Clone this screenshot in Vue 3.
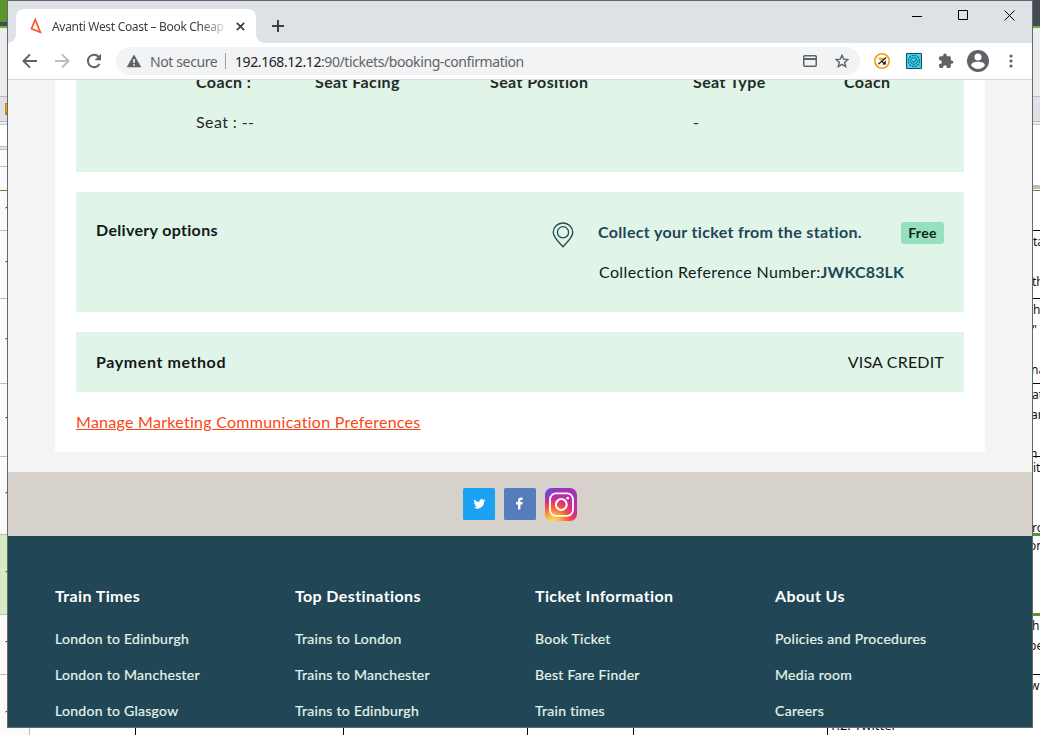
<script setup>
const footer = [
  { title: 'Train Times', links: ['London to Edinburgh', 'London to Manchester', 'London to Glasgow'] },
  { title: 'Top Destinations', links: ['Trains to London', 'Trains to Manchester', 'Trains to Edinburgh'] },
  { title: 'Ticket Information', links: ['Book Ticket', 'Best Fare Finder', 'Train times'] },
  { title: 'About Us', links: ['Policies and Procedures', 'Media room', 'Careers'] },
]
const leftLines = [230, 298, 383, 456, 534, 614, 674]
const ticks = [207, 261, 338, 417, 492, 571, 641, 711]
const rightLines = [230, 298, 383, 456, 674]
const bottomLines = [135, 343, 527, 633, 827]
const sheetText = [
  ['ta', 1033, 246], ['th', 1032, 286], ['h', 1033, 314], ['"', 1032, 334], ['na', 1031, 374],
  ['at', 1032, 399], ['an', 1031, 419], ['h', 1030, 458], ['it', 1033, 472], ['ro', 1032, 532],
  ['on', 1029, 550], ['h', 1032, 630], ['pe', 1029, 650], ['w', 1030, 690],
]
</script>

<template>
  <div class="desktop">
    <svg class="sheet" width="1040" height="735" viewBox="0 0 1040 735" shape-rendering="crispEdges">
      <rect width="1040" height="735" fill="#fff" />
      <rect width="1040" height="97" fill="#ebecee" />
      <rect width="8" height="22" fill="#5b962c" />
      <rect y="22" width="8" height="4" fill="#464b53" />
      <rect y="26" width="8" height="2" fill="#69b32d" />
      <rect x="1032" width="8" height="26" fill="#464b53" />
      <rect x="1032" y="26" width="8" height="2" fill="#69b32d" />
      <rect y="96" width="1040" height="26" fill="#dfe1e7" />
      <rect y="96" width="1040" height="1" fill="#bdbec2" />
      <rect y="121" width="1040" height="1" fill="#b7b8bc" />
      <rect y="122" width="1040" height="2" fill="#ececee" />
      <rect y="124" width="1040" height="1" fill="#c5c5c5" />
      <rect x="5" y="103" width="3" height="12" fill="#c9820f" />
      <rect x="6" y="104" width="2" height="8" fill="#f0ab1c" />
      <rect y="146" width="8" height="4" fill="#e4e4e4" />
      <rect y="146" width="8" height="1" fill="#bbb" />
      <rect y="149" width="8" height="1" fill="#bbb" />
      <rect y="150" width="29" height="585" fill="#fafafa" />
      <rect y="166" width="8" height="1" fill="#bcbcbc" />
      <rect y="535" width="8" height="79" fill="#d7ecc4" />
      <rect y="190" width="1040" height="1" fill="#4f8f2c" />
      <rect x="1032" y="185" width="8" height="4" fill="#bdbdbd" />
      <rect v-for="y in leftLines" :key="y" :y="y" width="8" height="1" fill="#bcbcbc" />
      <g v-for="y in ticks" :key="y">
        <rect x="5" :y="y" width="1" height="2" fill="#c9bda9" />
        <rect x="6" :y="y" width="2" height="1" fill="#3b3a22" />
      </g>
      <rect v-for="y in rightLines" :key="y" x="1032" :y="y" width="8" height="1" fill="#000" />
      <rect x="1032" y="533" width="8" height="3" fill="#5b962c" />
      <rect x="1032" y="613" width="8" height="3" fill="#5b962c" />
      <rect x="29" y="727" width="1" height="8" fill="#bcbcbc" />
      <rect v-for="x in bottomLines" :key="x" :x="x" y="727" width="1" height="8" fill="#000" />
      <text v-for="t in sheetText" :key="t[2]" :x="t[1]" :y="t[2]">{{ t[0] }}</text>
      <text class="list-item" x="829" y="730">1.2. Twitter</text>
    </svg>

    <div class="window">
      <div class="tabstrip">
        <div class="tab">
          <svg width="12" height="16" viewBox="0 0 12 16"><path d="M5.2 1.6 10.3 14.2 1.5 10.8Z" fill="none" stroke="#fb5527" stroke-width="1.7" /></svg>
          <span class="tab-title">Avanti West Coast – Book Cheap</span>
          <svg class="close" width="9" height="9" viewBox="0 0 9 9"><path d="M.8.8l7.4 7.4M8.2.8.8 8.2" stroke="#3c4043" stroke-width="1.7" /></svg>
        </div>
        <svg class="plus" width="12" height="12" viewBox="0 0 12 12"><path d="M6 0v12M0 6h12" stroke="#3c4043" stroke-width="2" /></svg>
        <div class="controls">
          <svg width="10" height="11" viewBox="0 0 10 11"><path d="M0 6.5h10" stroke="#000" /></svg>
          <svg width="10" height="10" viewBox="0 0 10 10"><path d="M.5.5h9v9h-9z" fill="none" stroke="#000" /></svg>
          <svg width="11" height="11" viewBox="0 0 11 11"><path d="M.5.5l10 10M10.5.5l-10 10" stroke="#000" /></svg>
        </div>
      </div>
      <div class="toolbar">
        <svg class="nav" width="16" height="16" viewBox="0 0 16 16"><path d="M15 8H2M8 1.4 1.5 8 8 14.6" fill="none" stroke="#5f6368" stroke-width="2" /></svg>
        <svg class="nav" width="16" height="16" viewBox="0 0 16 16"><path d="M1 8h13M8 1.4 14.5 8 8 14.6" fill="none" stroke="#babcbe" stroke-width="2" /></svg>
        <svg class="nav" width="16" height="16" viewBox="0 0 16 16"><path d="M13.5 11A6.2 6.2 0 1 1 12.6 3.7" fill="none" stroke="#5f6368" stroke-width="2" /><path d="M15 .8v6.4H8.6Z" fill="#5f6368" /></svg>
        <div class="omnibox">
          <svg width="16" height="14" viewBox="0 0 16 14"><path d="M8 .5 15.3 13.3H.7Z" fill="#5f6368" /><path d="M8 5v4M8 10.2v1.6" stroke="#fff" stroke-width="1.5" /></svg>
          <span class="insecure">Not secure</span>
          <span class="bar"></span>
          <span class="url">192.168.12.12<i>:90/tickets/booking-confirmation</i></span>
          <svg class="card-icon" width="14" height="12" viewBox="0 0 14 12"><rect x=".75" y=".75" width="12.5" height="10.5" rx="1" fill="none" stroke="#5f6368" stroke-width="1.5" /><path d="M1 4h12" stroke="#5f6368" stroke-width="2" /></svg>
          <svg width="14" height="14" viewBox="0 0 14 14"><path d="M7 1.2 8.7 5.1 13 5.5 9.7 8.3 10.7 12.5 7 10.3 3.3 12.5 4.3 8.3 1 5.5 5.3 5.1Z" fill="none" stroke="#5f6368" stroke-width="1.4" /></svg>
        </div>
        <div class="extensions">
          <svg width="16" height="16" viewBox="0 0 16 16"><circle cx="8" cy="8" r="7.2" fill="#fff" stroke="#f89a0b" stroke-width="1.6" /><path d="M3.6 4.8h7L7.5 8.2 5 6.3Z" fill="#f5a018" /><path d="M4.3 11.2 12.2 4.6M8 8.6l3 2.7" stroke="#222" stroke-width="1.3" fill="none" /><path d="M11.8 7v4.5H8.5Z" fill="#222" /></svg>
          <svg width="16" height="16" viewBox="0 0 16 16"><path d="M.5.5h15v15H.5z" fill="#3dd9ea" stroke="#164b60" /><circle cx="8" cy="8" r="5.6" fill="none" stroke="#1b6b80" stroke-width="1.4" stroke-dasharray="2 .9" /><circle cx="8" cy="8" r="3.4" fill="none" stroke="#1b6b80" /><path d="m6.2 8 1.4 1.5 2.6-3" fill="none" stroke="#164b60" /></svg>
          <svg width="16" height="16" viewBox="0 0 16 16"><path d="M13.7 7.4h-.9V4.6c0-.8-.6-1.4-1.4-1.4H8.7v-.9a1.7 1.7 0 0 0-3.5 0v.9H2.5c-.8 0-1.4.6-1.4 1.4v2.6H2a1.8 1.8 0 0 1 0 3.7h-.9v2.6c0 .8.6 1.4 1.4 1.4h2.6V14a1.8 1.8 0 0 1 3.7 0v.9h2.6c.8 0 1.4-.6 1.4-1.4v-2.7h.9a1.7 1.7 0 0 0 0-3.4Z" fill="#5f6368" /></svg>
          <svg class="avatar" width="22" height="22" viewBox="0 0 22 22"><circle cx="11" cy="11" r="11" fill="#5f6368" /><circle cx="11" cy="7" r="3.5" fill="#fff" /><path d="M4.2 15.2c0-4.6 13.6-4.6 13.6 0C16.2 17.7 13.7 19 11 19s-5.2-1.3-6.8-3.8Z" fill="#fff" /></svg>
          <svg class="menu" width="4" height="14" viewBox="0 0 4 14"><circle cx="2" cy="2" r="1.6" fill="#5f6368" /><circle cx="2" cy="7" r="1.6" fill="#5f6368" /><circle cx="2" cy="12" r="1.6" fill="#5f6368" /></svg>
        </div>
      </div>

      <div class="page">
        <main>
          <section class="seats">
            <b>Coach :</b><b>Seat Facing</b><b>Seat Position</b><b>Seat Type</b><b>Coach</b>
            <span>Seat : --</span><span></span><span></span><span>-</span>
          </section>
          <section class="delivery">
            <h2>Delivery options</h2>
            <svg width="22" height="26" viewBox="0 0 22 26"><path d="M11 24.8C8 21.3 1.2 15.7 1.2 10.3a9.8 9.3 0 0 1 19.6 0C20.8 15.7 14 21.3 11 24.8Z" fill="none" stroke="#214656" stroke-width="1.3" /><circle cx="11" cy="10.3" r="5.6" fill="none" stroke="#214656" stroke-width="1.3" /></svg>
            <div class="collect">
              <div class="station"><strong>Collect your ticket from the station.</strong><em>Free</em></div>
              <p><span class="ref">Collection Reference Number:</span><b>JWKC83LK</b></p>
            </div>
          </section>
          <section class="payment">
            <h2>Payment method</h2>
            <span>VISA CREDIT</span>
          </section>
          <a class="manage">Manage Marketing Communication Preferences</a>
        </main>
        <div class="social">
          <svg width="32" height="32" viewBox="0 0 32 32"><rect width="32" height="32" rx="1.5" fill="#1da1f2" /><path transform="translate(10.5 10) scale(.49)" d="M24 4.6a10 10 0 0 1-2.8.8 5 5 0 0 0 2.2-2.7c-1 .6-2 1-3.1 1.2a4.9 4.9 0 0 0-8.4 4.5C7.7 8.2 4.1 6.3 1.7 3.2a4.9 4.9 0 0 0 1.5 6.6c-.8 0-1.6-.2-2.2-.6a4.9 4.9 0 0 0 3.9 4.9c-.7.2-1.5.2-2.2.1a4.9 4.9 0 0 0 4.6 3.4A9.9 9.9 0 0 1 0 19.5 14 14 0 0 0 21.5 7.1 10 10 0 0 0 24 4.6Z" fill="#fff" /></svg>
          <svg width="32" height="32" viewBox="0 0 32 32"><rect width="32" height="32" rx="1.5" fill="#557dbc" /><path d="M14 21.6v-5h-2v-2.5h2v-1.3c0-2.2 1.2-3.2 2.9-3.2l1.8.1v2.1h-1.3c-.8 0-1 .4-1 1.2v1.1h2.3l-.3 2.5h-2v5Z" fill="#fff" /></svg>
          <svg width="33" height="33" viewBox="0 0 33 33">
            <defs>
              <radialGradient id="ig" cx=".25" cy="1.05" r="1.05"><stop offset="0" stop-color="#ffe16a" /><stop offset=".22" stop-color="#ffb43e" /><stop offset=".48" stop-color="#f7513c" /><stop offset=".7" stop-color="#d22c8c" /><stop offset="1" stop-color="#a532bd" /></radialGradient>
              <radialGradient id="ig2" cx="0" cy="0" r=".55"><stop offset="0" stop-color="#3e5ee0" /><stop offset="1" stop-color="#7d35cc" stop-opacity="0" /></radialGradient>
            </defs>
            <rect width="32" height="33" rx="7" fill="url(#ig)" /><rect width="32" height="33" rx="7" fill="url(#ig2)" />
            <rect x="5" y="5.3" width="23" height="22.5" rx="6" fill="none" stroke="#fff" stroke-width="1.8" /><circle cx="16.3" cy="16.5" r="5.4" fill="none" stroke="#fff" stroke-width="2" /><circle cx="22.7" cy="10.2" r="1.4" fill="#fff" />
          </svg>
        </div>
        <footer>
          <div v-for="col in footer" :key="col.title" class="col">
            <h3>{{ col.title }}</h3>
            <a v-for="link in col.links" :key="link">{{ link }}</a>
          </div>
        </footer>
      </div>
    </div>
  </div>
</template>

<style>
body { overflow: hidden; }
</style>

<style scoped>
* { box-sizing: border-box; }
svg { display: block; flex: none; }
h2, h3, p { margin: 0; }
.desktop { position: relative; width: 1040px; height: 735px; overflow: hidden; font-family: Lato, sans-serif; font-variant-ligatures: none; }
.sheet { position: absolute; left: 0; top: 0; }
.sheet text { font: 12px "Noto Sans", sans-serif; fill: #111; }
.sheet .list-item { font-size: 13px; }
.window { position: absolute; left: 7px; top: 0; width: 1026px; height: 728px; border: 1px solid #65676a; display: flex; flex-direction: column; background: #fff; }
.tabstrip { height: 42px; background: #dee1e6; display: flex; align-items: flex-start; padding-left: 8px; flex: none; }
.tab { position: relative; width: 240px; height: 34px; margin-top: 8px; background: #fff; border-radius: 8px 8px 0 0; display: flex; align-items: center; padding: 0 11px 0 14px; font: 12px "Noto Sans", sans-serif; color: #3c4043; }
.tab::before, .tab::after { content: ""; position: absolute; bottom: 0; width: 8px; height: 8px; }
.tab::before { left: -8px; background: radial-gradient(circle at 0 0, transparent 7.5px, #fff 8px); }
.tab::after { right: -8px; background: radial-gradient(circle at 100% 0, transparent 7.5px, #fff 8px); }
.tab-title { width: 172px; margin-left: 10px; margin-right: auto; white-space: nowrap; overflow: hidden; letter-spacing: -.31px; -webkit-mask-image: linear-gradient(90deg, #000 86%, rgba(0,0,0,.2)); mask-image: linear-gradient(90deg, #000 86%, rgba(0,0,0,.2)); }
.plus { margin: 19px 0 0 16px; }
.controls { display: flex; gap: 36px; margin: 9px 17px 0 auto; }
.toolbar { height: 37px; border-bottom: 1px solid #d6d8da; display: flex; align-items: center; flex: none; padding-left: 14px; }
.nav { margin-right: 16px; }
.omnibox { width: 744px; height: 28px; margin-left: -2px; border-radius: 14px; background: #f1f3f4; display: flex; align-items: center; padding: 0 11px 0 10px; font: 14px "Noto Sans", sans-serif; color: #5f6368; white-space: nowrap; }
.insecure { margin-left: 8px; width: 67px; letter-spacing: -.38px; }
.bar { width: 1px; height: 16px; background: #9aa0a6; margin: 0 9px 0 8px; }
.url { color: #202124; letter-spacing: -.41px; }
.url i { font-style: normal; color: #5f6368; }
.card-icon { margin-left: auto; margin-right: 18px; }
.extensions { display: flex; align-items: center; gap: 16px; margin-left: 14px; }
.avatar { margin-left: -3px; }
.menu { margin-left: 3.5px; }
.page { flex: 1; background: #f4f4f4; overflow: hidden; color: #17211f; }
main { width: 930px; height: 372px; margin: 0 auto; background: #fff; padding: 0 21px; }
section { background: #e1f4e8; }
.seats { height: 92px; padding-left: 120px; display: grid; grid-template-columns: 119px 175px 203px 151px 1fr; grid-template-rows: 20px 1fr; font-size: 16px; line-height: 20px; overflow: hidden; color: #232a27; letter-spacing: .4px; }
.seats b { margin-top: -8px; }
.seats span { margin-top: 12px; }
.delivery { height: 120px; margin-top: 20px; padding-left: 20px; display: flex; }
h2 { font-size: 16px; line-height: 20px; width: 455px; margin-top: 28px; color: #111a1a; white-space: nowrap; letter-spacing: .32px; }
.delivery svg { margin: 30px 24px 0 1px; }
.collect { flex: 1; padding: 30px 20px 0 0; font-size: 16px; }
.station { height: 22px; display: flex; justify-content: space-between; align-items: center; color: #214656; white-space: nowrap; letter-spacing: .33px; }
.station strong { line-height: 20px; margin-top: -3px; }
.station em { width: 43px; height: 22px; border-radius: 3px; background: #95e0bd; font-size: 14px; font-style: normal; font-weight: 700; line-height: 22px; text-align: center; color: #13211f; }
.collect p { margin: 18px 0 0 1px; line-height: 20px; color: #111a1a; white-space: nowrap; }
.ref { letter-spacing: .38px; }
.collect p b { color: #214656; letter-spacing: .15px; }
.payment { height: 60px; margin-top: 20px; padding: 0 20px; display: flex; justify-content: space-between; align-items: center; font-size: 16px; color: #111a1a; }
.payment h2 { margin: 0; letter-spacing: .59px; }
.payment span { line-height: 20px; letter-spacing: .18px; }
.manage { display: block; width: max-content; margin-top: 20px; font-size: 16px; line-height: 20px; color: #fa4616; text-decoration: underline; letter-spacing: .27px; }
.social { height: 64px; margin-top: 20px; background: #d6d1ca; display: flex; justify-content: center; align-items: flex-start; gap: 9px; padding-top: 16px; }
footer { height: 192px; background: #214656; color: #fff; padding: 50px 0 0 47px; display: grid; grid-template-columns: repeat(4, 240px); }
h3 { font-size: 16px; line-height: 20px; margin-bottom: 15px; letter-spacing: .38px; }
.col a { display: block; font-size: 14px; line-height: 36px; color: #e4f5e9; letter-spacing: .29px; -webkit-text-stroke: .2px #e4f5e9; }
</style>
